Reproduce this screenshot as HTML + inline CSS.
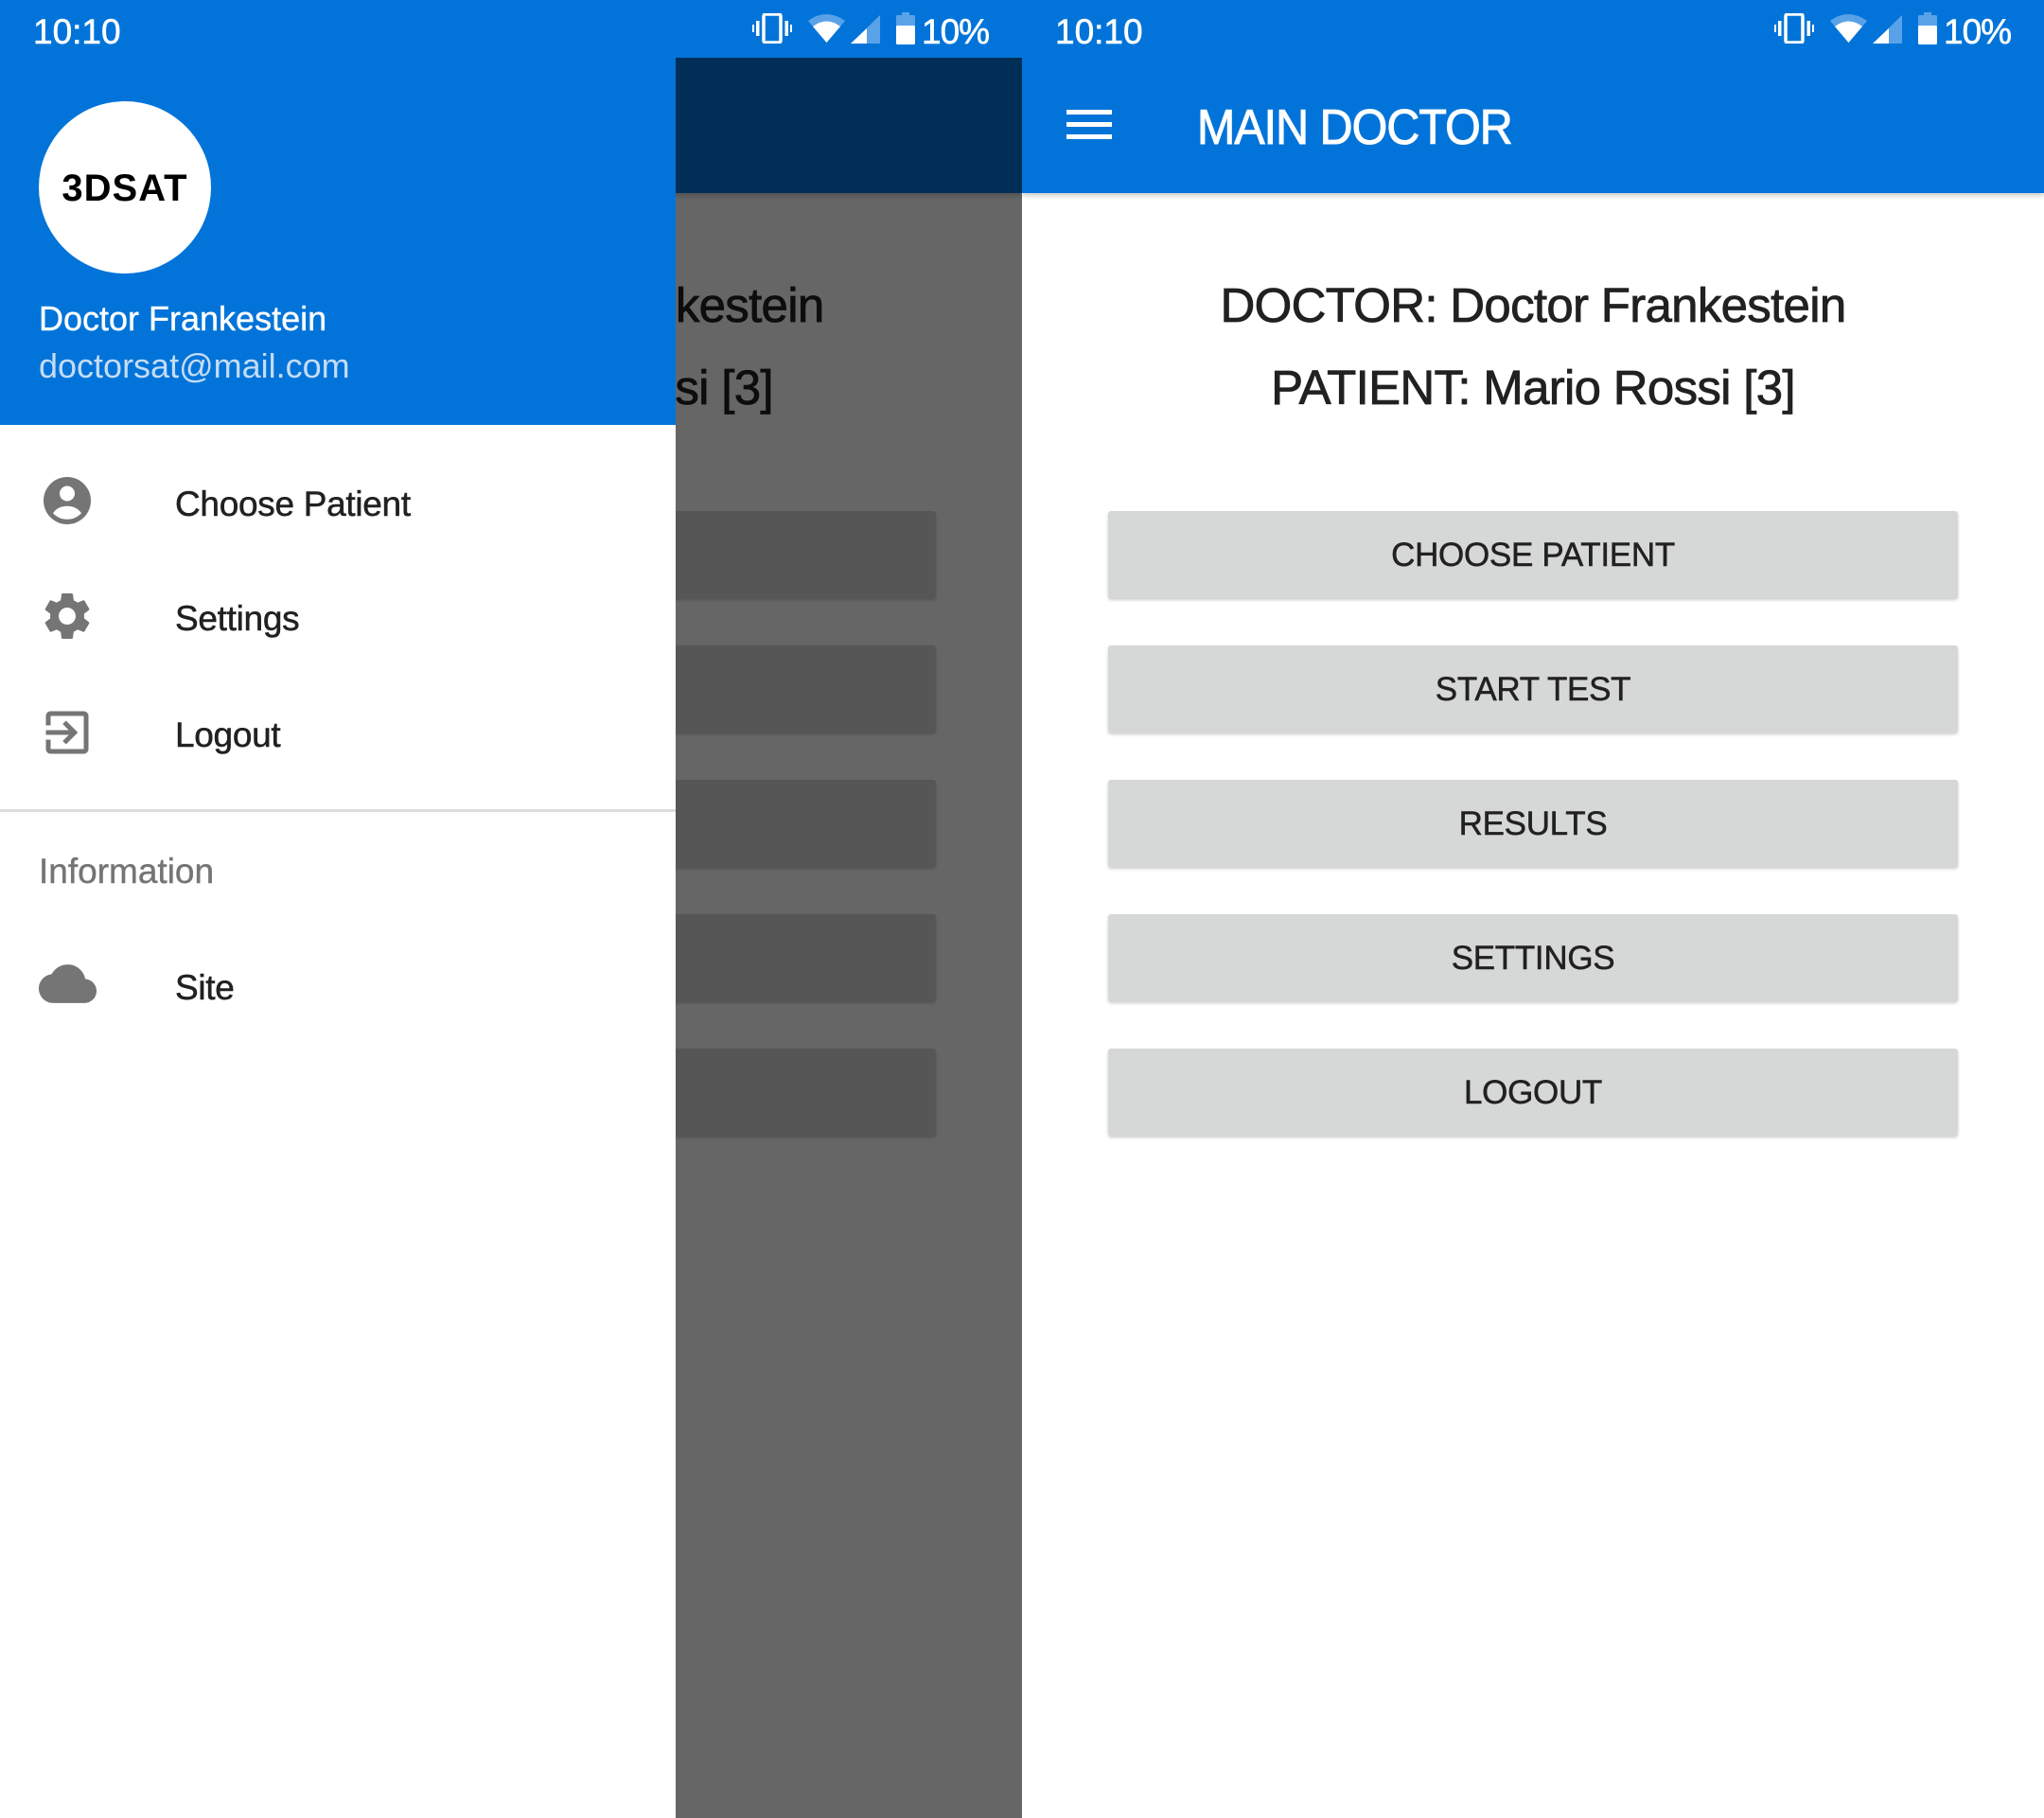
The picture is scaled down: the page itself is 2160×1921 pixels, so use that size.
<!DOCTYPE html>
<html><head><meta charset="utf-8"><style>
*{margin:0;padding:0;box-sizing:border-box}
body{width:2160px;height:1921px;overflow:hidden;background:#fff;font-family:"Liberation Sans",sans-serif;position:relative}
.abs{position:absolute}
.screen{position:absolute;top:0;width:1080px;height:1921px;background:#fff;overflow:hidden}
.sb{position:absolute;left:0;top:0;width:1080px;height:61px;background:#0274d9;color:#fff}
.sb .t{position:absolute;left:35px;top:14px;font-size:37px;line-height:40px;-webkit-text-stroke:0.6px #fff}
.sb .p{position:absolute;left:974px;top:14px;font-size:37px;line-height:40px;letter-spacing:-1px;-webkit-text-stroke:0.6px #fff}
.ab{position:absolute;left:0;top:61px;width:1080px;height:143px;background:#0274d9;box-shadow:0 3px 5px rgba(0,0,0,.2)}
.ham{position:absolute;left:47px;width:48px;height:5px;background:#fff}
.title{position:absolute;left:185px;top:44px;font-size:52px;line-height:60px;color:#fff;letter-spacing:-1px;transform:scaleX(.93);transform-origin:left;-webkit-text-stroke:1px #fff}
.line{position:absolute;left:0;width:1080px;text-align:center;font-size:51px;color:#212121;letter-spacing:-0.7px;-webkit-text-stroke:0.8px #212121}
.btn{position:absolute;left:91px;width:898px;height:92px;background:#d6d7d7;border-radius:3px;box-shadow:0 2px 3px rgba(0,0,0,.2);text-align:center;line-height:94px;font-size:35px;color:#212121;letter-spacing:-0.3px;-webkit-text-stroke:0.5px #212121}
.ov{position:absolute;left:0;top:61px;width:1080px;height:1860px;background:rgba(0,0,0,.6)}
.drawer{position:absolute;left:0;top:0;width:714px;height:1921px;background:#fff}
.item{position:absolute;left:185px;font-size:37px;color:#212121;line-height:44px;letter-spacing:-0.3px;-webkit-text-stroke:0.5px #212121}
.ic{position:absolute}
</style></head><body>

<div class="screen" style="left:0">
  <div class="ab"></div>
  <div class="line" style="top:293px;line-height:60px">DOCTOR: Doctor Frankestein</div>
  <div class="line" style="top:380px;line-height:60px">PATIENT: Mario Rossi [3]</div>
  <div class="btn" style="top:540px"></div>
  <div class="btn" style="top:682px"></div>
  <div class="btn" style="top:824px"></div>
  <div class="btn" style="top:966px"></div>
  <div class="btn" style="top:1108px"></div>
  <div class="ov"></div>
</div>

<div class="drawer">
  <div class="abs" style="left:0;top:0;width:714px;height:449px;background:#0274d9"></div>
  <div class="abs" style="left:41px;top:107px;width:182px;height:182px;border-radius:50%;background:#fff;text-align:center;line-height:184px;font-size:40px;font-weight:bold;color:#000;letter-spacing:1px">3DSAT</div>
  <div class="abs" style="left:41px;top:315px;font-size:36px;line-height:44px;color:#fff;-webkit-text-stroke:0.4px #fff">Doctor Frankestein</div>
  <div class="abs" style="left:41px;top:365px;font-size:36px;line-height:44px;color:#c5dcf5">doctorsat@mail.com</div>

  <svg class="ic" style="left:41px;top:499px" width="60" height="60" viewBox="0 0 24 24"><circle cx="12" cy="12" r="10" fill="#757575"/><circle cx="12" cy="9" r="3.2" fill="#fff"/><path d="M6 17.3c1.3-2 3.6-3 6-3s4.7 1 6 3c-1.5 1.7-3.7 2.6-6 2.6s-4.5-.9-6-2.6z" fill="#fff"/></svg>
  <div class="item" style="top:511px">Choose Patient</div>

  <svg class="ic" style="left:41px;top:621px" width="60" height="60" viewBox="0 0 24 24"><path fill="#757575" d="M19.14 12.94c.04-.3.06-.61.06-.94 0-.32-.02-.64-.07-.94l2.03-1.58c.18-.14.23-.41.12-.61l-1.92-3.32c-.12-.22-.37-.29-.59-.22l-2.39.96c-.5-.38-1.03-.7-1.62-.94l-.36-2.54c-.04-.24-.24-.41-.48-.41h-3.84c-.24 0-.43.17-.47.41l-.36 2.540c-.59.24-1.13.57-1.62.94l-2.39-.96c-.22-.08-.47 0-.59.22L2.74 8.87c-.12.21-.08.47.12.61l2.03 1.58c-.05.3-.09.63-.09.94s.02.64.07.94l-2.03 1.58c-.18.14-.23.41-.12.61l1.92 3.32c.12.22.37.29.59.22l2.39-.96c.5.38 1.03.7 1.62.94l.36 2.54c.05.24.24.41.48.41h3.84c.24 0 .44-.17.47-.41l.36-2.54c.59-.24 1.13-.56 1.62-.94l2.39.96c.22.08.47 0 .59-.22l1.92-3.32c.12-.22.07-.47-.12-.61l-2.01-1.58zM12 15.6c-1.98 0-3.6-1.62-3.6-3.6s1.62-3.6 3.6-3.6 3.6 1.62 3.6 3.6-1.62 3.6-3.6 3.6z"/></svg>
  <div class="item" style="top:632px">Settings</div>

  <svg class="ic" style="left:41px;top:744px" width="60" height="60" viewBox="0 0 24 24"><path fill="#757575" d="M10.09 15.59L11.5 17l5-5-5-5-1.41 1.41L12.67 11H3v2h9.67l-2.58 2.59zM19 3H5c-1.11 0-2 .9-2 2v4h2V5h14v14H5v-4H3v4c0 1.1.89 2 2 2h14c1.1 0 2-.9 2-2V5c0-1.1-.9-2-2-2z"/></svg>
  <div class="item" style="top:755px">Logout</div>

  <div class="abs" style="left:0;top:855px;width:714px;height:3px;background:#dcdcdc"></div>
  <div class="abs" style="left:41px;top:899px;font-size:37px;line-height:44px;color:#757575;-webkit-text-stroke:0.4px #757575">Information</div>

  <svg class="ic" style="left:41px;top:1019px" width="61" height="41" viewBox="0 4 24 16"><path fill="#757575" d="M19.35 10.04C18.67 6.59 15.64 4 12 4 9.11 4 6.6 5.64 5.35 8.04 2.34 8.36 0 10.91 0 14c0 3.31 2.69 6 6 6h13c2.76 0 5-2.24 5-5 0-2.64-2.05-4.78-4.65-4.96z"/></svg>
  <div class="item" style="top:1022px">Site</div>
</div>

<div class="screen" style="left:1080px">
  <div class="ab">
    <div class="ham" style="top:55px"></div>
    <div class="ham" style="top:68px"></div>
    <div class="ham" style="top:81px"></div>
    <div class="title">MAIN DOCTOR</div>
  </div>
  <div class="line" style="top:293px;line-height:60px">DOCTOR: Doctor Frankestein</div>
  <div class="line" style="top:380px;line-height:60px">PATIENT: Mario Rossi [3]</div>
  <div class="btn" style="top:540px">CHOOSE PATIENT</div>
  <div class="btn" style="top:682px">START TEST</div>
  <div class="btn" style="top:824px">RESULTS</div>
  <div class="btn" style="top:966px">SETTINGS</div>
  <div class="btn" style="top:1108px">LOGOUT</div>
</div>

<div class="sb" style="left:0"><div class="t">10:10</div>
<svg class="abs" style="left:795px;top:14px" width="44" height="32" viewBox="0 0 44 32"><rect x="12" y="1" width="18" height="30" rx="2" fill="none" stroke="#fff" stroke-width="3.5"/><rect x="4" y="8" width="3.5" height="16" fill="#fff"/><rect x="34.5" y="8" width="3.5" height="16" fill="#fff"/><rect x="0" y="12" width="2" height="8" fill="#fff"/><rect x="40" y="12" width="2" height="8" fill="#fff"/></svg>
<svg class="abs" style="left:853px;top:14px" width="42" height="32" viewBox="0 0 42 32"><path d="M1 8 Q20 -6 40 8 L20.5 31Z" fill="#5aa2e8"/><path d="M6 14 Q20.5 3 35 14 L20.5 31Z" fill="#fff"/></svg>
<svg class="abs" style="left:899px;top:16px" width="32" height="30" viewBox="0 0 32 30"><path d="M31 0V30H0Z" fill="#5aa2e8"/><path d="M17 14V30H0Z" fill="#fff"/></svg>
<svg class="abs" style="left:947px;top:13px" width="20" height="34" viewBox="0 0 20 34"><rect x="6" y="0" width="8" height="4" fill="#5aa2e8"/><rect x="0" y="3" width="20" height="31" rx="1.5" fill="#5aa2e8"/><rect x="0" y="14" width="20" height="20" rx="1.5" fill="#fff"/></svg>
<div class="p">10%</div></div>

<div class="sb" style="left:1080px"><div class="t">10:10</div>
<svg class="abs" style="left:795px;top:14px" width="44" height="32" viewBox="0 0 44 32"><rect x="12" y="1" width="18" height="30" rx="2" fill="none" stroke="#fff" stroke-width="3.5"/><rect x="4" y="8" width="3.5" height="16" fill="#fff"/><rect x="34.5" y="8" width="3.5" height="16" fill="#fff"/><rect x="0" y="12" width="2" height="8" fill="#fff"/><rect x="40" y="12" width="2" height="8" fill="#fff"/></svg>
<svg class="abs" style="left:853px;top:14px" width="42" height="32" viewBox="0 0 42 32"><path d="M1 8 Q20 -6 40 8 L20.5 31Z" fill="#5aa2e8"/><path d="M6 14 Q20.5 3 35 14 L20.5 31Z" fill="#fff"/></svg>
<svg class="abs" style="left:899px;top:16px" width="32" height="30" viewBox="0 0 32 30"><path d="M31 0V30H0Z" fill="#5aa2e8"/><path d="M17 14V30H0Z" fill="#fff"/></svg>
<svg class="abs" style="left:947px;top:13px" width="20" height="34" viewBox="0 0 20 34"><rect x="6" y="0" width="8" height="4" fill="#5aa2e8"/><rect x="0" y="3" width="20" height="31" rx="1.5" fill="#5aa2e8"/><rect x="0" y="14" width="20" height="20" rx="1.5" fill="#fff"/></svg>
<div class="p">10%</div></div>

</body></html>
